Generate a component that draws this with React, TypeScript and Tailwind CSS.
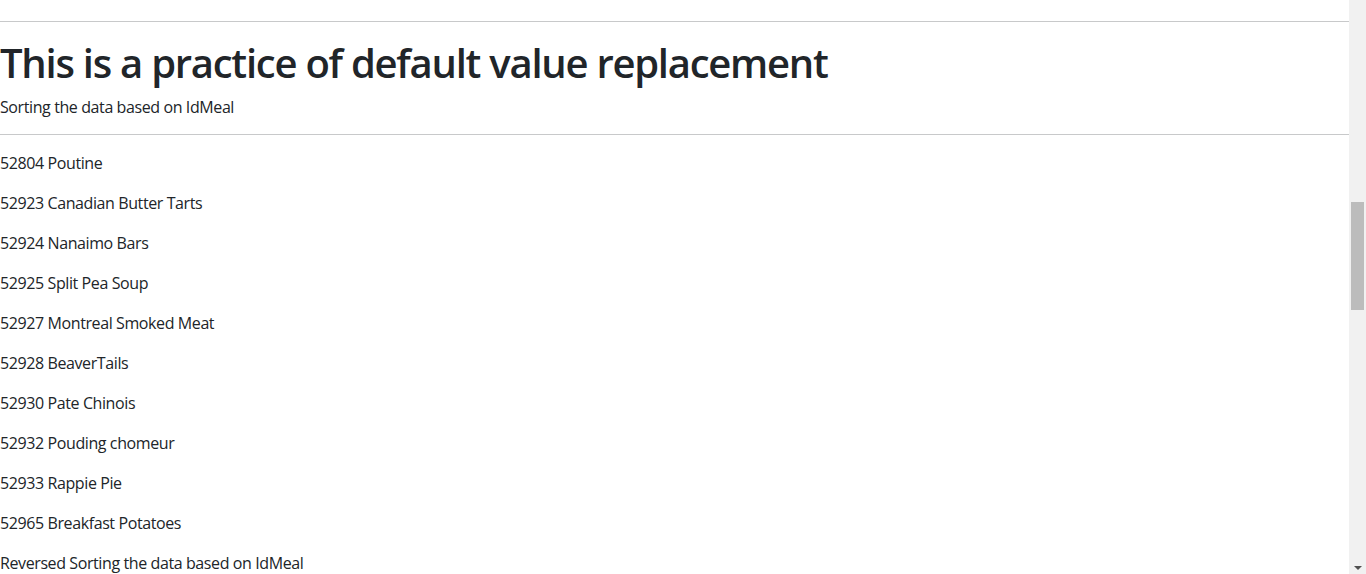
const meals = [
  { id: 52804, name: 'Poutine' },
  { id: 52923, name: 'Canadian Butter Tarts' },
  { id: 52924, name: 'Nanaimo Bars' },
  { id: 52925, name: 'Split Pea Soup' },
  { id: 52927, name: 'Montreal Smoked Meat' },
  { id: 52928, name: 'BeaverTails' },
  { id: 52930, name: 'Pate Chinois' },
  { id: 52932, name: 'Pouding chomeur' },
  { id: 52933, name: 'Rappie Pie' },
  { id: 52965, name: 'Breakfast Potatoes' },
]

export default function App() {
  return (
    <div className="flex h-[574px] w-[1366px] overflow-hidden bg-white font-['Open_Sans',sans-serif] text-[#212529]">
      {/* Page content (scrolled) */}
      <div className="flex-1 overflow-hidden pt-[5px]">
        <hr className="my-4 border-t border-[#c8c9ca]" />
        <h1 className="mb-2 text-[40px] font-semibold leading-[50px] tracking-[-1.25px]">
          This is a practice of default value replacement
        </h1>
        <p className="mb-4 text-base leading-[22px] tracking-[-0.4px]">Sorting the data based on IdMeal</p>
        <hr className="my-4 border-t border-[#c8c9ca]" />
        {meals.map((meal) => (
          <p key={meal.id} className="mb-4 text-base leading-6 tracking-[-0.4px]">
            {meal.id} {meal.name}
          </p>
        ))}
        <p className="mb-4 text-base leading-6 tracking-[-0.4px]">Reversed Sorting the data based on IdMeal</p>
      </div>

      {/* Scrollbar */}
      <div className="flex w-[17px] flex-col items-center bg-[#f1f1f1]">
        <div className="mt-[202px] h-[108px] w-[13px] bg-[#bcbcbc]" />
        <div className="flex-1" />
        <svg width="8" height="5" viewBox="0 0 8 5" className="mb-[3px]">
          <polygon points="0,0 8,0 4,4" fill="#505050" />
        </svg>
      </div>
    </div>
  )
}
